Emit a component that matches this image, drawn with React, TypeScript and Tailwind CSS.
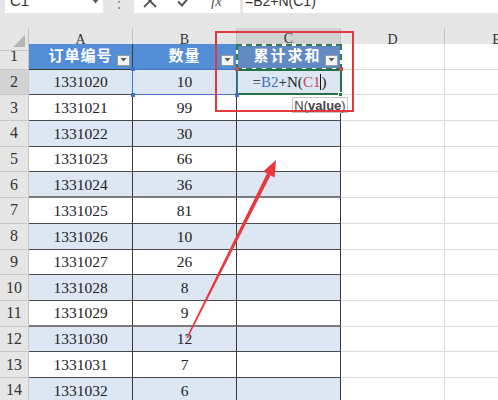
import React from 'react';

const rows: [string, string][] = [
  ['1331020', '10'],
  ['1331021', '99'],
  ['1331022', '30'],
  ['1331023', '66'],
  ['1331024', '36'],
  ['1331025', '81'],
  ['1331026', '10'],
  ['1331027', '26'],
  ['1331028', '8'],
  ['1331029', '9'],
  ['1331030', '12'],
  ['1331031', '7'],
  ['1331032', '6'],
];

function FilterBtn() {
  return (
    <div className="absolute right-[2px] bottom-[3px] w-[13px] h-[11px] bg-[#f4f4f4] border border-[#9a9a9a] flex items-center justify-center">
      <svg width="7" height="4" viewBox="0 0 7 4">
        <polygon points="0.5,0 6.5,0 3.5,3.5" fill="#555" />
      </svg>
    </div>
  );
}

export default function App() {
  const serif = "font-['Liberation_Serif','Noto_Sans_CJK_SC',serif]";
  const cols = 'grid grid-cols-[29px_104px_104px_104px_104px_104px] w-[549px]';
  return (
    <div className="relative w-[498px] h-[400px] overflow-hidden bg-[#e6e6e6] font-['Liberation_Sans',sans-serif]">
      {/* formula bar (top cut off) */}
      <div className="h-[24px] -mt-[11px] flex items-stretch">
        <div className="ml-[5px] w-[98px] bg-white flex items-center pl-[5px] pr-[4px]">
          <span className="text-[15px] text-[#333] flex-1">C1</span>
          <svg width="7" height="5" viewBox="0 0 7 5">
            <polygon points="0,0 7,0 3.5,4.5" fill="#555" />
          </svg>
        </div>
        <div className="w-[31px] flex flex-col items-center justify-center gap-[4px] pt-[2px]">
          <div className="w-[2px] h-[2px] bg-[#9a9a9a]" />
          <div className="w-[2px] h-[2px] bg-[#9a9a9a]" />
          <div className="w-[2px] h-[2px] bg-[#9a9a9a]" />
        </div>
        <div className="w-[106px] bg-white flex items-center pl-[9px] gap-[20px]">
          <svg width="14" height="14" viewBox="0 0 14 14">
            <path d="M1 1 L13 13 M13 1 L1 13" stroke="#555" strokeWidth="1.8" fill="none" />
          </svg>
          <svg width="14" height="14" viewBox="0 0 14 14">
            <path d="M1 7.5 L5 11.5 L13 2" stroke="#555" strokeWidth="2" fill="none" />
          </svg>
          <span className={`${serif} italic text-[15px] text-[#555]`}>fx</span>
        </div>
        <div className="ml-[3px] flex-1 bg-white flex items-center pl-[2px]">
          <span className="text-[14px] text-[#333]">=B2+N(C1)</span>
        </div>
      </div>
      <div className="h-[15px]" />

      {/* column headers */}
      <div className={`${cols} h-[16px] ${serif} text-[14px] text-[#333]`}>
        <div className="relative border-r border-b border-[#c4c4c4] flex items-end justify-end pr-[3px] pb-[3px]">
          <svg width="12" height="12" viewBox="0 0 12 12">
            <polygon points="12,0 12,12 0,12" fill="#b5b5b5" />
          </svg>
        </div>
        <div className="border-r border-b border-[#c4c4c4] flex items-center justify-center">A</div>
        <div className="border-r border-b border-[#c4c4c4] flex items-center justify-center">B</div>
        <div className="bg-[#d2d2d2] border-r border-b-2 border-r-[#c4c4c4] border-b-[#217346] flex items-center justify-center">C</div>
        <div className="border-r border-b border-[#c4c4c4] flex items-center justify-center">D</div>
        <div className="border-r border-b border-[#c4c4c4] flex items-center justify-center">E</div>
      </div>

      {/* row 1 */}
      <div className={`${cols} h-[25.7px] ${serif}`}>
        <div className="border-r border-b border-[#c8c8c8] flex items-center justify-center text-[16px] text-[#333]">1</div>
        <div className="relative bg-[#538dd5] border-r border-b border-[#3a3a3a] flex items-center justify-center text-white font-bold text-[15px] tracking-[1px]">
          订单编号
          <FilterBtn />
        </div>
        <div className="relative bg-[#538dd5] border-r border-b border-[#3a3a3a] flex items-center justify-center text-white font-bold text-[15px] tracking-[1px]">
          数量
          <FilterBtn />
        </div>
        <div className="relative bg-[#6189c2] border-r border-b border-[#3a3a3a] flex items-center justify-center text-white font-bold text-[15px] tracking-[2px] pr-[2px]">
          累计求和
          <FilterBtn />
        </div>
        <div className="bg-white border-r border-b border-[#dadada]" />
        <div className="bg-white border-r border-b border-[#dadada]" />
      </div>

      {rows.map(([id, qty], i) => {
        const n = i + 2;
        const band = n % 2 === 0 ? 'bg-[#dde7f3]' : 'bg-white';
        const thick = n === 6 || n === 11;
        const bcol = thick ? 'border-b-2 border-b-[#7a7a7a]' : 'border-b border-b-[#4a4a4a]';
        return (
          <div key={n} className={`${cols} h-[25.7px] ${serif} text-[15.5px] text-[#222]`}>
            <div className={`${n === 2 ? 'bg-[#d3d3d3]' : ''} border-r border-b border-[#c8c8c8] flex items-center justify-center text-[16px] text-[#333]`}>{n}</div>
            <div className={`${band} border-r border-r-[#3a3a3a] ${bcol} flex items-center justify-center`}>{id}</div>
            <div className={`${band} border-r border-r-[#3a3a3a] ${bcol} flex items-center justify-center`}>{qty}</div>
            <div className={`${band} border-r border-r-[#3a3a3a] ${bcol} flex items-center justify-center`}>
              {n === 2 ? (
                <span className="flex items-center text-[15px] pl-[2px]">
                  <span>=</span>
                  <span className="text-[#3d6fc1]">B2</span>
                  <span>+N(</span>
                  <span className="text-[#c0504d]">C1</span>
                  <span className="w-px h-[16px] bg-[#111]" />
                  <span>)</span>
                </span>
              ) : null}
            </div>
            <div className="bg-white border-r border-b border-[#dadada]" />
            <div className="bg-white border-r border-b border-[#dadada]" />
          </div>
        );
      })}

      {/* C1 copy marquee */}
      <div className="absolute left-[236px] top-[44px] w-[106px] h-[26px] border-2 border-white" />
      <div className="absolute left-[236px] top-[44px] w-[106px] h-[26px] border-2 border-dashed border-[#2f7a55]" />
      {/* C2 active cell */}
      <div className="absolute left-[236px] top-[69px] w-[106px] h-[26px] border-2 border-[#217346]" />
      <div className="absolute left-[338px] top-[92px] w-[5px] h-[5px] bg-[#217346] border border-white" />
      {/* B2 reference */}
      <div className="absolute left-[132px] top-[69px] w-[106px] h-[26px] border border-[#4472c4]" />
      <div className="absolute left-[131px] top-[67px] w-[4px] h-[4px] bg-[#4472c4]" />
      <div className="absolute left-[235px] top-[67px] w-[4px] h-[4px] bg-[#4472c4]" />
      <div className="absolute left-[131px] top-[93px] w-[4px] h-[4px] bg-[#4472c4]" />
      <div className="absolute left-[235px] top-[93px] w-[4px] h-[4px] bg-[#4472c4]" />
      {/* C1 reference corners */}
      <div className="absolute left-[235px] top-[67px] w-[4px] h-[4px] bg-[#c0504d]" />
      <div className="absolute left-[339px] top-[67px] w-[4px] h-[4px] bg-[#c0504d]" />

      {/* tooltip */}
      <div className="absolute left-[292px] top-[97px] w-[56px] h-[16px] bg-white border border-[#c6c6c6] flex items-center justify-center text-[13px] text-[#444] leading-none">
        N(<b>value</b>)
      </div>

      {/* red annotation box */}
      <div className="absolute left-[215px] top-[31px] w-[139px] h-[81px] border-2 border-[#e0393e]" />

      {/* red arrow */}
      <svg className="absolute left-0 top-0" width="498" height="400" viewBox="0 0 498 400">
        <polygon points="186.4,337.6 187.6,338.4 270.6,175.2 266.9,173.4" fill="#e8383d" />
        <polygon points="276,160 274.6,177.4 263.2,171.6" fill="#e8383d" />
      </svg>
    </div>
  );
}
